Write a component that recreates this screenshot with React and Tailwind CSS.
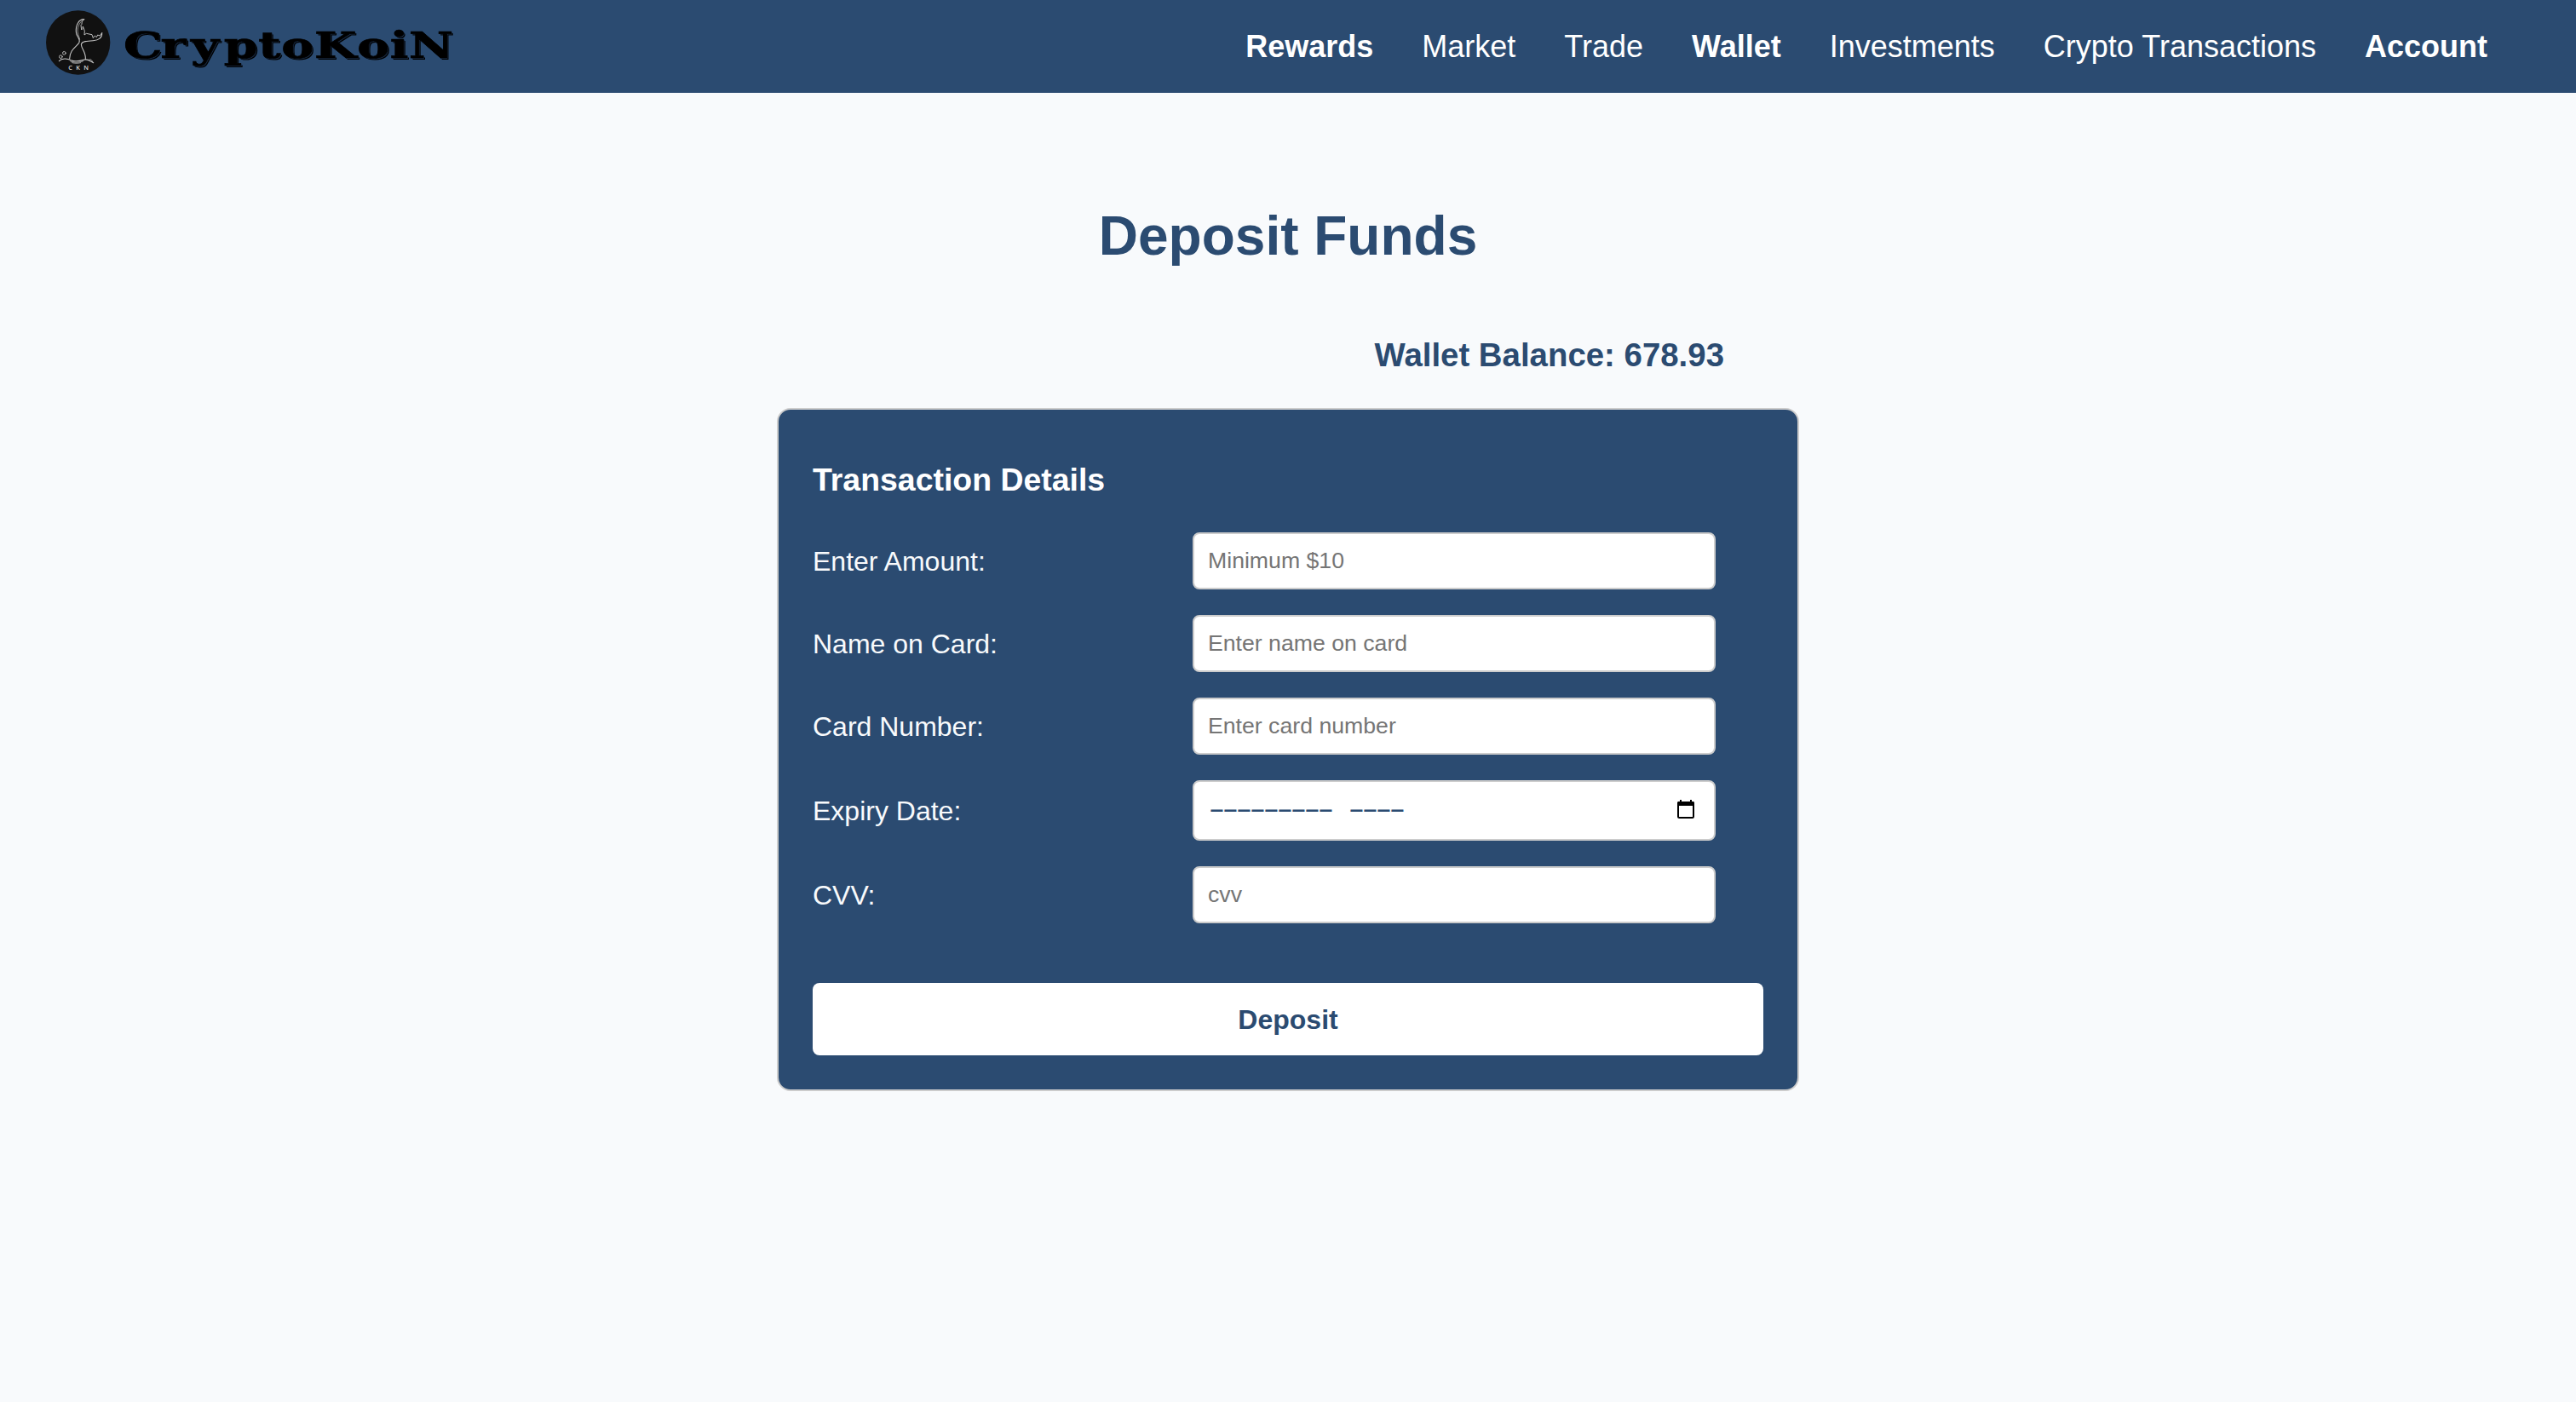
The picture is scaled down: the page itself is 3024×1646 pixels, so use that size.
const NAV = [
  { label: "Rewards", bold: true },
  { label: "Market" },
  { label: "Trade" },
  { label: "Wallet", bold: true },
  { label: "Investments" },
  { label: "Crypto Transactions" },
  { label: "Account", bold: true },
];

function Logo() {
  return (
    <svg className="-mt-[9px] h-[76px] w-[76px] shrink-0" viewBox="42 35 228 228" fill="none" stroke="#c9c9c9" strokeWidth="3.2" strokeLinecap="round" strokeLinejoin="round">
      <circle cx="155" cy="149" r="113" fill="#111111" stroke="none" />
      <path d="M176 67C158 66 146 88 148 112C149 128 164 135 159 148C152 162 126 172 125 206" />
      <path d="M170 71C157 82 152 98 154 112C156 126 160 130 161 138" strokeWidth="2" />
      <path d="M176 67C169 73 168 78 168 84L165 88L167 104L171 100L172 92L178 108L177 122L184 117L204 121L208 133L214 125L220 130L224 122L231 125L239 115" strokeWidth="2.8" />
      <path d="M239 115C240 132 228 141 208 142C188 143 168 144 166 156C167 172 183 182 181 208" />
      <circle cx="94" cy="199" r="5.5" strokeWidth="2.6" />
      <circle cx="106" cy="186" r="5.5" strokeWidth="2.6" />
      <path d="M88 214C98 204 116 204 130 211C148 219 164 213 178 209C190 206 198 215 209 220" />
      <path d="M128 215C143 221 158 219 172 215M134 220C146 223 156 222 164 220M192 211C196 205 203 208 206 217" strokeWidth="2.2" />
      <text x="121" y="245" className="font-['Open_Sans',sans-serif] text-[22px] font-semibold" fill="#d8d8d8" stroke="none" textLength="71">
        CKN
      </text>
    </svg>
  );
}

function Wordmark() {
  return (
    <span className="-mt-[4px] origin-left scale-x-[1.34] font-['DejaVu_Serif',serif] text-[42.5px] leading-[64px] font-bold text-black [-webkit-text-stroke:0.7px_#000] [font-kerning:none] [text-shadow:0.75px_1px_0_#1a2d47,1.5px_2px_0_#000]">
      <span className="tracking-[-1.4px]">C</span>
      <span className="tracking-[4.2px]">ry</span>
      <span className="tracking-[0.5px]">ptoKoiN</span>
    </span>
  );
}

function CalendarIcon() {
  return (
    <svg className="h-[22px] w-5" viewBox="0 0 20 22" fill="none">
      <rect x="1" y="3" width="18" height="18" rx="1.5" stroke="#000" strokeWidth="2" />
      <path d="M0 3.5A1.5 1.5 0 0 1 1.5 2h17A1.5 1.5 0 0 1 20 3.5V7H0ZM3 0h2v3H3ZM15 0h2v3h-2Z" fill="#000" />
    </svg>
  );
}

function Field({ label, placeholder }) {
  return (
    <label className="flex items-center">
      <span className="w-[446px] text-[32px] leading-10 text-[#f8fafc]">{label}</span>
      <input
        className="h-[67px] w-[614px] rounded-lg border-2 border-[#cccccc] bg-white px-4 pb-px text-[26.667px] placeholder:text-[#757575]"
        placeholder={placeholder}
      />
    </label>
  );
}

export default function App() {
  return (
    <div className="min-h-[1646px] bg-[#f8fafc] font-['Liberation_Sans',Arial,sans-serif]">
      <header className="flex h-[109px] items-center justify-between bg-[#2b4b71] pr-[104px] pl-[54px]">
        <div className="flex items-center gap-[15px]">
          <Logo />
          <Wordmark />
        </div>
        <nav className="flex gap-[57px] text-[36px] leading-[42px] text-white">
          {NAV.map((n) => (
            <a key={n.label} className={n.bold ? "font-bold" : ""}>{n.label}</a>
          ))}
        </nav>
      </header>
      <main className="mx-auto flex w-[1200px] flex-col">
        <h1 className="mt-[136px] text-center text-[64px] leading-[64px] font-bold text-[#2b4b71]">Deposit Funds</h1>
        <p className="mt-[88px] pr-[88px] text-right text-[38.4px] leading-10 font-bold text-[#2b4b71]">Wallet Balance: 678.93</p>
        <form className="mt-[42px] flex flex-col rounded-2xl border-2 border-[#cccccc] bg-[#2b4b71] p-10">
          <h3 className="mt-5 mb-10 text-[37.44px] leading-11 font-bold text-white">Transaction Details</h3>
          <div className="flex flex-col gap-[30px]">
            <Field label="Enter Amount:" placeholder="Minimum $10" />
            <Field label="Name on Card:" placeholder="Enter name on card" />
            <Field label="Card Number:" placeholder="Enter card number" />
            <div className="flex items-center">
              <span className="w-[446px] text-[32px] leading-10 text-[#f8fafc]">Expiry Date:</span>
              <div className="flex h-[71px] w-[614px] items-center justify-between rounded-lg border-2 border-[#cccccc] bg-white pr-[23px] pb-[3px] pl-[19.5px]">
                <span className="flex gap-[20px] pt-[4px] font-['Liberation_Mono',monospace] text-[23px] font-bold tracking-[2.2px] text-[#2b4b71]">
                  <span>—————————</span>
                  <span>————</span>
                </span>
                <CalendarIcon />
              </div>
            </div>
            <Field label="CVV:" placeholder="cvv" />
          </div>
          <button type="button" className="mt-[70px] h-[85px] rounded-lg bg-white text-[32px] font-bold text-[#2b4b71]">Deposit</button>
        </form>
      </main>
    </div>
  );
}
